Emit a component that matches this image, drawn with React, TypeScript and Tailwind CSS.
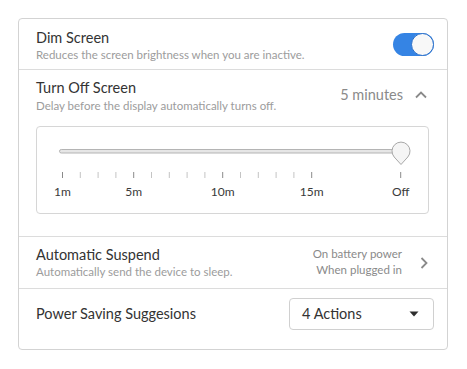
import React from "react";

const STEP = 17.8;
const ticks = [0,1,2,3,4,5,6,7,8,9,10,11,12,13,14,19];
const majors: Record<number, string> = { 0: "1m", 4: "5m", 9: "10m", 14: "15m", 19: "Off" };

function Slider() {
  return (
    <div className="relative h-[86px]">
      <svg className="absolute left-0 top-0" width="392" height="60" viewBox="0 0 392 60">
        <rect x="22.5" y="22.5" width="342" height="3.5" rx="1.75" fill="#e6e6e6" stroke="#b4b4b4" strokeWidth="1" />
        {ticks.map((t) => {
          const x = 25.5 + t * STEP;
          const major = t in majors;
          return (
            <line key={t} x1={x} x2={x} y1={45} y2={51} stroke={major ? "#8a8a8a" : "#c4c4c4"} strokeWidth="1" />
          );
        })}
        <path d="M364 37.5 L357.2 30 A9 9 0 1 1 370.8 30 Z" fill="#f5f5f5" stroke="#a8a8a8" strokeWidth="1" strokeLinejoin="round" />
      </svg>
      {Object.entries(majors).map(([k, label]) => (
        <span
          key={k}
          className="absolute top-[57px] -translate-x-1/2 text-[12px] leading-[16px] text-[#3a3a3a]"
          style={{ left: 25.5 + Number(k) * STEP }}
        >
          {label}
        </span>
      ))}
    </div>
  );
}

export default function App() {
  return (
    <div className="w-[467px] h-[369px] bg-white pt-[18px] pl-[18px]" style={{ fontFamily: 'Lato, sans-serif' }}>
      <div className="w-[430px] border border-[#d3d3d3] rounded-[4px] bg-white text-[#333333]">
        {/* Dim screen */}
        <div className="flex items-center h-[51px] pl-[17px] pr-[13px] border-b border-[#dcdcdc]">
          <div className="flex-1 pt-[1px]">
            <div className="text-[14.5px] leading-[19px]">Dim Screen</div>
            <div className="text-[11.5px] leading-[15px] text-[#9c9c9c]">Reduces the screen brightness when you are inactive.</div>
          </div>
          <div className="w-[41px] h-[23px] rounded-full bg-[#3584e4] flex items-center justify-end">
            <div className="w-[23px] h-[23px] rounded-full bg-[#f8f8f8] border border-[#2a6fc9]" />
          </div>
        </div>
        {/* Turn off screen */}
        <div className="pl-[17px] pr-[18px] pt-[8px] pb-[22px] border-b border-[#dcdcdc]">
          <div className="flex items-center">
            <div className="flex-1">
              <div className="text-[14.5px] leading-[20px]">Turn Off Screen</div>
              <div className="text-[11.5px] leading-[15px] text-[#9c9c9c]">Delay before the display automatically turns off.</div>
            </div>
            <div className="flex items-center gap-[11px] pr-[1px] pb-[2px]">
              <span className="text-[14.5px] text-[#8a8a8a]">5 minutes</span>
              <svg width="14" height="10" viewBox="0 0 14 10"><path d="M2 7.5 L7 2.5 L12 7.5" fill="none" stroke="#8a8a8a" strokeWidth="1.8" /></svg>
            </div>
          </div>
          <div className="mt-[13px] h-[88px] border border-[#d6d6d6] rounded-[4px]">
            <Slider />
          </div>
        </div>
        {/* Automatic suspend */}
        <div className="flex items-center h-[52px] pl-[17px] pr-[18px] border-b border-[#dcdcdc]">
          <div className="flex-1 pb-[1px]">
            <div className="text-[14.5px] leading-[19px]">Automatic Suspend</div>
            <div className="text-[11.5px] leading-[15px] text-[#9c9c9c]">Automatically send the device to sleep.</div>
          </div>
          <div className="text-right text-[11.5px] leading-[16px] text-[#8a8a8a] pb-[1px]">
            <div>On battery power</div>
            <div>When plugged in</div>
          </div>
          <svg className="ml-[17px]" width="10" height="14" viewBox="0 0 10 14"><path d="M2.5 2 L7.5 7 L2.5 12" fill="none" stroke="#8a8a8a" strokeWidth="1.8" /></svg>
        </div>
        {/* Power saving */}
        <div className="flex items-start h-[60px] pt-[9px] pl-[17px] pr-[13px]">
          <div className="flex-1 text-[14.5px] leading-[32px]">Power Saving Suggesions</div>
          <div className="w-[145px] h-[32px] border border-[#d0d0d0] rounded-[4px] flex items-center justify-between pl-[12px] pr-[14px]">
            <span className="text-[14.5px] text-[#333333]">4 Actions</span>
            <svg width="10" height="6" viewBox="0 0 10 6"><path d="M0.5 0.5 H9.5 L5 5.5 Z" fill="#2e2e2e" /></svg>
          </div>
        </div>
      </div>
    </div>
  );
}
